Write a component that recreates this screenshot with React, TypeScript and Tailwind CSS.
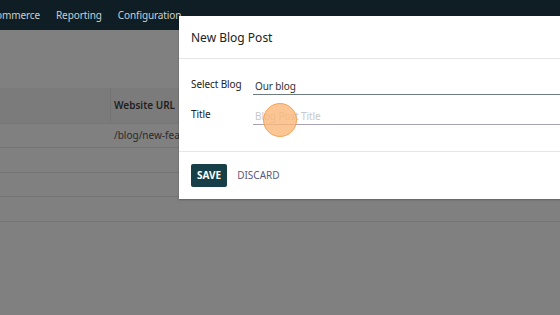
import React from "react";

const font = { fontFamily: '"Noto Sans", "Open Sans", sans-serif' };

function NavBar() {
  return (
    <div className="flex h-[30px] shrink-0 items-center bg-[#0f1e25] text-[10px] tracking-[-0.1px] text-[#c9ced1]">
      <div className="flex items-center gap-[16px]">
        <div className="flex w-[40px] justify-end overflow-hidden whitespace-nowrap">
          <span>eCommerce</span>
        </div>
        <span>Reporting</span>
        <span>Configuration</span>
      </div>
    </div>
  );
}

function ListBehind() {
  return (
    <div className="flex flex-1 flex-col bg-[#808080]">
      <div className="h-[58px]" />
      <div className="flex h-[36px] border-b border-[#777] bg-[#7b7b7b]">
        <div className="w-[111px] border-r border-[#747474]" />
        <div className="flex items-center pl-[3px] text-[10px] font-semibold text-[#1f1f1f]">Website URL</div>
      </div>
      <div className="flex h-[24px] border-b border-[#747474]">
        <div className="w-[111px]" />
        <div className="flex items-center pl-[3px] text-[10px] text-[#2a2a2a]">/blog/new-features-launch</div>
      </div>
      <div className="h-[25px] border-b border-[#747474]" />
      <div className="h-[24px] border-b border-[#747474]" />
      <div className="h-[25px] border-b border-[#747474]" />
    </div>
  );
}

function Field({ label, children, lineColor }: { label: string; children: React.ReactNode; lineColor: string }) {
  return (
    <div className="flex h-[22px] items-center">
      <div className="w-[62px] text-[10px] tracking-[-0.1px] text-[#222]">{label}</div>
      <div className={`flex h-[22px] flex-1 items-center border-b pl-[2px] pt-[5px] text-[10px] tracking-[-0.1px] ${lineColor}`}>{children}</div>
    </div>
  );
}

function Modal() {
  return (
    <div className="absolute left-[179px] top-[16px] w-[420px] bg-white shadow-[0_1px_2px_rgba(0,0,0,0.25)]">
      <div className="flex h-[43px] items-center border-b border-[#e6e6e6] px-[12px] pt-[2px] text-[12px] text-[#222]">
        New Blog Post
      </div>
      <div className="flex h-[92px] flex-col gap-[8px] px-[12px] pt-[14px]">
        <Field label="Select Blog" lineColor="border-[#6d7a80] text-[#333]">Our blog</Field>
        <div className="relative">
          <Field label="Title" lineColor="border-[#a8a2b8] text-[#c8c8c8]">Blog Post Title</Field>
          <div className="absolute left-[72px] top-0 h-[34px] w-[34px] rounded-full border border-[#f5a55a] bg-[#fbb679]/80" />
        </div>
      </div>
      <div className="flex h-[48px] items-center gap-[10px] border-t border-[#e6e6e6] px-[12px]">
        <button className="h-[23px] rounded-[2px] bg-[#163f48] px-[6px] text-[10px] font-bold text-white">SAVE</button>
        <button className="text-[10px] text-[#5c5a7c]">DISCARD</button>
      </div>
    </div>
  );
}

export default function App() {
  return (
    <div className="relative flex h-[315px] w-[560px] flex-col overflow-hidden bg-[#808080]" style={font}>
      <NavBar />
      <ListBehind />
      <Modal />
    </div>
  );
}
